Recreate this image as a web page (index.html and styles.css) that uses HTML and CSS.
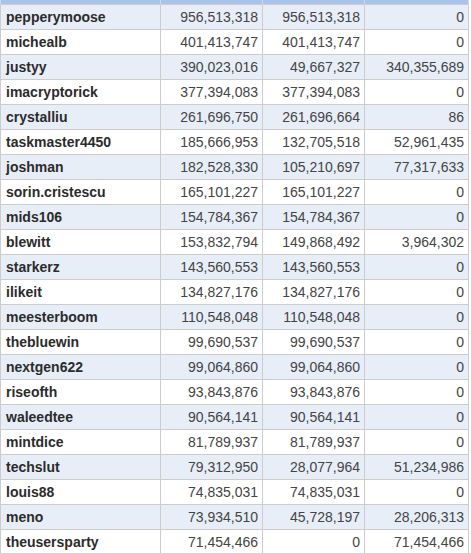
FILE: index.html
```html
<!DOCTYPE html>
<html>
<head>
<meta charset="utf-8">
<link rel="stylesheet" href="styles.css">
</head>
<body>
<table class="board">
<colgroup><col class="c-name"><col class="c-num"><col class="c-num"><col class="c-num3"></colgroup>
<thead><tr><th></th><th></th><th></th><th></th></tr></thead>
<tbody>
<tr><td class="name">pepperymoose</td><td>956,513,318</td><td>956,513,318</td><td>0</td></tr>
<tr><td class="name">michealb</td><td>401,413,747</td><td>401,413,747</td><td>0</td></tr>
<tr><td class="name">justyy</td><td>390,023,016</td><td>49,667,327</td><td>340,355,689</td></tr>
<tr><td class="name">imacryptorick</td><td>377,394,083</td><td>377,394,083</td><td>0</td></tr>
<tr><td class="name">crystalliu</td><td>261,696,750</td><td>261,696,664</td><td>86</td></tr>
<tr><td class="name">taskmaster4450</td><td>185,666,953</td><td>132,705,518</td><td>52,961,435</td></tr>
<tr><td class="name">joshman</td><td>182,528,330</td><td>105,210,697</td><td>77,317,633</td></tr>
<tr><td class="name">sorin.cristescu</td><td>165,101,227</td><td>165,101,227</td><td>0</td></tr>
<tr><td class="name">mids106</td><td>154,784,367</td><td>154,784,367</td><td>0</td></tr>
<tr><td class="name">blewitt</td><td>153,832,794</td><td>149,868,492</td><td>3,964,302</td></tr>
<tr><td class="name">starkerz</td><td>143,560,553</td><td>143,560,553</td><td>0</td></tr>
<tr><td class="name">ilikeit</td><td>134,827,176</td><td>134,827,176</td><td>0</td></tr>
<tr><td class="name">meesterboom</td><td>110,548,048</td><td>110,548,048</td><td>0</td></tr>
<tr><td class="name">thebluewin</td><td>99,690,537</td><td>99,690,537</td><td>0</td></tr>
<tr><td class="name">nextgen622</td><td>99,064,860</td><td>99,064,860</td><td>0</td></tr>
<tr><td class="name">riseofth</td><td>93,843,876</td><td>93,843,876</td><td>0</td></tr>
<tr><td class="name">waleedtee</td><td>90,564,141</td><td>90,564,141</td><td>0</td></tr>
<tr><td class="name">mintdice</td><td>81,789,937</td><td>81,789,937</td><td>0</td></tr>
<tr><td class="name">techslut</td><td>79,312,950</td><td>28,077,964</td><td>51,234,986</td></tr>
<tr><td class="name">louis88</td><td>74,835,031</td><td>74,835,031</td><td>0</td></tr>
<tr><td class="name">meno</td><td>73,934,510</td><td>45,728,197</td><td>28,206,313</td></tr>
<tr><td class="name">theusersparty</td><td>71,454,466</td><td>0</td><td>71,454,466</td></tr>
</tbody>
</table>
</body>
</html>
```
FILE: styles.css
```css
html, body {
  margin: 0;
  padding: 0;
  background: #ffffff;
}
.board {
  border-collapse: collapse;
  table-layout: fixed;
  width: 468px;
  font-family: "Liberation Sans", Arial, sans-serif;
  font-size: 14px;
  color: #444444;
}
.c-name { width: 160px; }
.c-num { width: 102px; }
.c-num3 { width: 104px; }
.board th {
  height: 4px;
  padding: 0;
  background: #a9c4e8;
  border-left: 1px solid #c9d9ef;
  border-right: 1px solid #c9d9ef;
}
.board td {
  height: 24px;
  padding: 0 4px 0 5px;
  border: 1px solid #cccccc;
  text-align: right;
  vertical-align: middle;
  white-space: nowrap;
}
.board td.name {
  text-align: left;
  font-weight: bold;
  color: #2b2b2b;
}
.board tbody tr:nth-child(odd) td {
  background: #e8eef8;
}
```
